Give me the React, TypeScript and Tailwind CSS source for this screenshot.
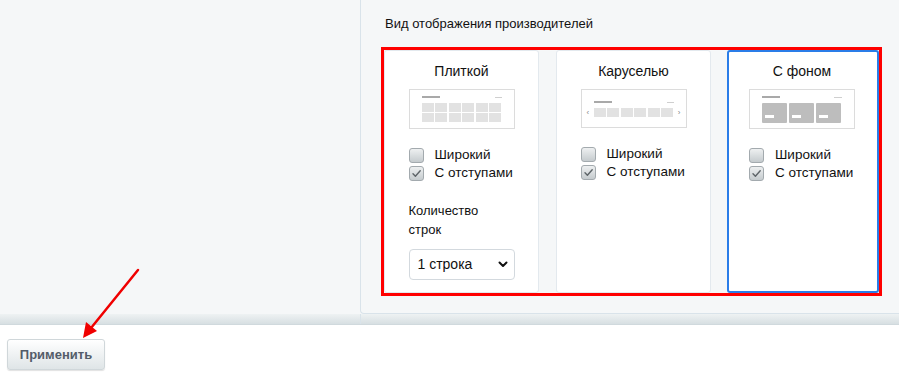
import React from "react"

function Check({ checked }: { checked?: boolean }) {
    return (
        <span className="w-[15px] h-[15px] shrink-0 rounded-[3px] border border-[#a3aaae] bg-linear-to-b from-[#eef0f1] to-[#c5cbce] flex items-center justify-center">
            {checked && (
                <svg width="11" height="11" viewBox="0 0 11 11" fill="none">
                    <path d="M2 5.8 L4.4 8.2 L9.2 2.8" stroke="#5d6468" strokeWidth="1.4" strokeLinecap="round" strokeLinejoin="round" />
                </svg>
            )}
        </span>
    )
}

function Options() {
    return (
        <div className="flex flex-col gap-[3px] mt-[19px] whitespace-nowrap">
            <label className="flex items-center gap-[11px] h-[15px]">
                <Check />
                <span className="text-[13.5px] text-[#111]">Широкий</span>
            </label>
            <label className="flex items-center gap-[11px] h-[15px]">
                <Check checked />
                <span className="text-[13.5px] text-[#111]">С отступами</span>
            </label>
        </div>
    )
}

function TilePreview() {
    return (
        <div className="w-[106px] h-[40px] border border-[#dcdcdc] bg-white px-[12px] pt-[6px]">
            <div className="flex justify-between items-center h-[2px]">
                <span className="w-[18px] h-[2px] bg-[#a9a9a9]" />
                <span className="w-[7px] h-[1px] bg-[#cfcfcf]" />
            </div>
            <div className="grid grid-cols-6 gap-x-[1.5px] gap-y-[1px] mt-[5px] w-[80px]">
                {Array.from({ length: 12 }).map((_, i) => (
                    <span key={i} className="h-[9px] bg-[#e2e2e2]" />
                ))}
            </div>
        </div>
    )
}

function CarouselPreview() {
    return (
        <div className="w-[106px] h-[39px] border border-[#dcdcdc] bg-white px-[5px] pt-[11px]">
            <div className="flex justify-between items-center h-[2px] px-[7px]">
                <span className="w-[18px] h-[2px] bg-[#a9a9a9]" />
                <span className="w-[7px] h-[1px] bg-[#cfcfcf]" />
            </div>
            <div className="flex items-center justify-between mt-[5px]">
                <span className="text-[8px] leading-none text-[#888]">‹</span>
                <div className="flex gap-[1.5px]">
                    {Array.from({ length: 6 }).map((_, i) => (
                        <span key={i} className="w-[12px] h-[9px] bg-[#e2e2e2]" />
                    ))}
                </div>
                <span className="text-[8px] leading-none text-[#888]">›</span>
            </div>
        </div>
    )
}

function BgPreview() {
    return (
        <div className="w-[106px] h-[40px] border border-[#dcdcdc] bg-white px-[12px] pt-[6px]">
            <div className="flex justify-between items-center h-[2px]">
                <span className="w-[18px] h-[2px] bg-[#a9a9a9]" />
                <span className="w-[8px] h-[1px] bg-[#cfcfcf]" />
            </div>
            <div className="flex gap-[2px] mt-[5px]">
                {Array.from({ length: 3 }).map((_, i) => (
                    <div key={i} className="w-[25px] h-[20px] bg-[#bdbdbd] rounded-[1px] pl-[3px] pt-[12px]">
                        <span className="block w-[9px] h-[3px] bg-white" />
                    </div>
                ))}
            </div>
        </div>
    )
}

function Card({ title, selected, className, children }: { title: string, selected?: boolean, className: string, children: React.ReactNode }) {
    return (
        <div className={`${className} shrink-0 bg-white rounded-[3px] ${selected ? "border-2 border-[#2a7de8] pt-[11px] pr-[2px]" : "border border-[#e3e9ee] pt-[12px]"}`}>
            <div className="text-center text-[14px] leading-[16px] text-[#111]">{title}</div>
            <div className="flex justify-center mt-[10px]">{children}</div>
        </div>
    )
}

export default function App() {
    return (
        <div className="w-[899px] h-[380px] bg-white relative font-['Liberation_Sans',Arial,sans-serif] overflow-hidden">
            <div className="h-[325px] flex flex-col bg-[#f5f7f8]">
                <div className="flex h-[314px]">
                    <div className="w-[360px]" />
                    <div className="flex-1 border-l border-b border-[#d9e3ea] rounded-bl-[4px] pl-[20px] pt-[16px]">
                        <div className="pl-[4px] text-[13px] leading-[16px] text-[#111]">Вид отображения производителей</div>
                        <div className="mt-[15px] w-[501px] h-[249px] border-[3px] border-[#ff0000] flex">
                            <Card title="Плиткой" className="w-[155px]">
                                <div className="w-[106px]">
                                    <TilePreview />
                                    <Options />
                                    <div className="mt-[20px] text-[13px] leading-[19px] text-[#111]">Количество<br />строк</div>
                                    <div className="mt-[10px] h-[31px] border border-[#d3d9de] rounded-[4px] flex items-center justify-between pl-[8px] pr-[6px] bg-white">
                                        <span className="text-[14px] text-[#111]">1 строка</span>
                                        <svg width="10" height="7" viewBox="0 0 10 7" fill="none">
                                            <path d="M1.5 1.5 L5 5 L8.5 1.5" stroke="#111" strokeWidth="2" strokeLinecap="round" strokeLinejoin="round" />
                                        </svg>
                                    </div>
                                </div>
                            </Card>
                            <Card title="Каруселью" className="w-[155px] ml-[17px]">
                                <div className="w-[106px]">
                                    <CarouselPreview />
                                    <Options />
                                </div>
                            </Card>
                            <Card title="С фоном" selected className="w-[152px] ml-[16px]">
                                <div className="w-[106px]">
                                    <BgPreview />
                                    <Options />
                                </div>
                            </Card>
                        </div>
                    </div>
                </div>
                <div className="flex h-[11px] bg-linear-to-b from-[#eef2f3] to-[#d7dfe2] border-b border-[#d0d9dd]">
                    <div className="w-[360px]" />
                    <div className="flex-1 border-l border-[#d9e3ea]" />
                </div>
            </div>
            <div className="pl-[7px] pt-[14px]">
                <button className="w-[98px] h-[31px] rounded-[3px] border border-[#d0d7da] bg-linear-to-b from-[#ffffff] to-[#dfe5e7] text-[13px] font-bold text-[#535c69] shadow-[0_1px_1px_rgba(0,0,0,0.12)]">
                    Применить
                </button>
            </div>
            <svg className="absolute left-0 top-0 pointer-events-none" width="899" height="380" viewBox="0 0 899 380">
                <line x1="138" y1="270" x2="91" y2="328" stroke="#f00000" strokeWidth="2.5" strokeLinecap="round" />
                <polygon points="83,338 86,322 97,331" fill="#f00000" />
            </svg>
        </div>
    )
}
